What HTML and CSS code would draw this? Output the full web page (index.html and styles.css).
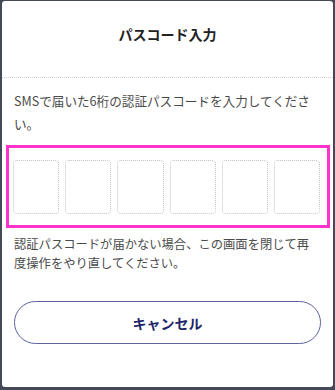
FILE: index.html
```html
<!DOCTYPE html>
<html lang="ja">
<head>
<meta charset="utf-8">
<title>パスコード入力</title>
<link rel="stylesheet" href="styles.css">
</head>
<body>
<div class="modal">
  <div class="modal-header">
    <h1 class="modal-title">パスコード入力</h1>
  </div>
  <div class="modal-body">
    <p class="lead">SMSで届いた6桁の認証パスコードを入力してください。</p>
    <div class="code-wrap">
      <div class="code-boxes">
        <input class="code-box" type="text" maxlength="1">
        <input class="code-box" type="text" maxlength="1">
        <input class="code-box" type="text" maxlength="1">
        <input class="code-box" type="text" maxlength="1">
        <input class="code-box" type="text" maxlength="1">
        <input class="code-box" type="text" maxlength="1">
      </div>
    </div>
    <p class="note">認証パスコードが届かない場合、この画面を閉じて再度操作をやり直してください。</p>
    <button class="cancel-btn" type="button">キャンセル</button>
  </div>
</div>
</body>
</html>
```

FILE: styles.css
```css
html, body {
  margin: 0;
  padding: 0;
}
body {
  background: #444957;
  font-family: "Noto Sans CJK JP", "Noto Sans", sans-serif;
  width: 335px;
  height: 390px;
  overflow: hidden;
}
.modal {
  margin: 1px 2px 0 2px;
  height: 386px;
  background: #ffffff;
  border-radius: 3px;
  box-sizing: border-box;
}
.modal-header {
  height: 77px;
  border-bottom: 1px dotted #cfcfcf;
  display: flex;
  justify-content: center;
  padding-top: 22px;
  box-sizing: border-box;
}
.modal-title {
  margin: 0;
  font-size: 14px;
  font-weight: bold;
  line-height: 22px;
  color: #222222;
}
.modal-body {
  padding: 0 12px;
}
.lead {
  margin: 11px 0 0 0;
  font-size: 12.6px;
  line-height: 23px;
  color: #4a4a4a;
}
.code-wrap {
  margin: 10px -9px 0 -8px;
  border: 3px solid #ff33cc;
  padding: 12px 7px 11px 4px;
}
.code-boxes {
  display: grid;
  grid-template-columns: repeat(6, 1fr);
  gap: 6px;
}
.code-box {
  display: block;
  width: 100%;
  height: 54px;
  box-sizing: border-box;
  border: 1px dotted #c4c4c4;
  border-radius: 4px;
  background: #ffffff;
  padding: 0;
  margin: 0;
  outline: none;
}
.note {
  margin: 7px 0 0 0;
  font-size: 12.3px;
  line-height: 19px;
  color: #4a4a4a;
}
.cancel-btn {
  display: block;
  width: 100%;
  height: 43px;
  margin-top: 28px;
  background: #ffffff;
  border: 1px solid #5d61a0;
  border-radius: 22px;
  font-family: "Noto Sans CJK JP", "Noto Sans", sans-serif;
  font-size: 14px;
  font-weight: bold;
  color: #1d2468;
  padding: 0;
}
```
